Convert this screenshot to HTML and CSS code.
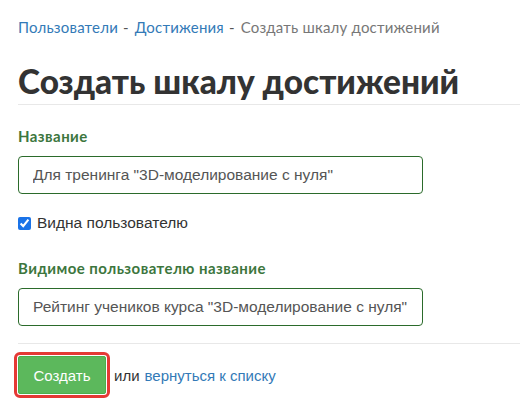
FILE: index.html
```html
<!DOCTYPE html>
<html lang="ru">
<head>
<meta charset="utf-8">
<link rel="stylesheet" href="styles.css">
</head>
<body>
<div class="page">
  <nav class="crumbs">
    <a href="#" class="crumb-link">Пользователи</a><span class="sep">-</span>
    <a href="#" class="crumb-link">Достижения</a><span class="sep">-</span>
    <span class="crumb-current">Создать шкалу достижений</span>
  </nav>
  <h1 class="title">Создать шкалу достижений</h1>
  <form class="form">
    <div class="field">
      <label class="field-label">Название</label>
      <input class="field-input" type="text" value="Для тренинга &quot;3D-моделирование с нуля&quot;">
    </div>
    <label class="check">
      <input type="checkbox" class="check-box" checked>
      <span class="check-text">Видна пользователю</span>
    </label>
    <div class="field">
      <label class="field-label">Видимое пользователю название</label>
      <input class="field-input" type="text" value="Рейтинг учеников курса &quot;3D-моделирование с нуля&quot;">
    </div>
    <div class="actions">
      <button type="button" class="btn-create">Создать</button>
      <span class="or">или</span>
      <a href="#" class="back-link">вернуться к списку</a>
    </div>
  </form>
</div>
</body>
</html>
```

FILE: styles.css
```css
* { box-sizing: border-box; }
html, body { margin: 0; padding: 0; background: #fff; }
body {
  font-family: "Lato", "Open Sans", sans-serif;
  color: #333;
  width: 520px;
  height: 409px;
  overflow: hidden;
}
.page {
  padding: 17px 0 0 18px;
}
.crumbs {
  font-size: 15px;
  line-height: 20px;
  color: #555;
  letter-spacing: 0.2px;
}
.crumb-link { color: #337ab7; text-decoration: none; }
.sep { margin: 0 2px 0 5px; color: #555; }
.crumb-current { color: #777; }
.title {
  margin: 24px 0 0 0;
  font-size: 33.4px;
  line-height: 40px;
  font-weight: 900;
  color: #333;
  padding-bottom: 3px;
  border-bottom: 1px solid #e8e8e8;
}
.form { padding-top: 22px; }
.field { display: flex; flex-direction: column; }
.field-label {
  font-size: 15px;
  line-height: 18px;
  font-weight: 700;
  letter-spacing: 0.45px;
  color: #3c763d;
  margin-bottom: 11px;
}
.field-input {
  width: 405px;
  height: 38px;
  border: 1px solid #2b6b2b;
  border-radius: 4px;
  padding: 0 14px;
  font-family: "Liberation Sans", Arial, sans-serif;
  font-size: 15.5px;
  color: #555;
  outline: none;
}
.check {
  display: flex;
  align-items: center;
  margin: 20px 0 27px 0;
  font-size: 15.5px;
  line-height: 18px;
  color: #333;
  font-family: "Liberation Sans", Arial, sans-serif;
}
.check-box {
  width: 13px; height: 13px;
  margin: 0 6px 0 0;
  accent-color: #1a73e8;
}
.actions {
  margin-top: 17px;
  border-top: 1px solid #e8e8e8;
  padding-top: 12px;
  display: flex;
  align-items: center;
  font-size: 15px;
  font-family: "Liberation Sans", Arial, sans-serif;
}
.btn-create {
  width: 88px;
  height: 38px;
  background: #5cb85c;
  border: 1px solid #4cae4c;
  border-radius: 2px;
  color: #fff;
  font-family: "Liberation Sans", Arial, sans-serif;
  font-size: 15px;
  outline: 3px solid #e53935;
  outline-offset: 1px;
}
.or { margin-left: 8px; color: #333; }
.back-link { margin-left: 5px; color: #337ab7; text-decoration: none; }
```
